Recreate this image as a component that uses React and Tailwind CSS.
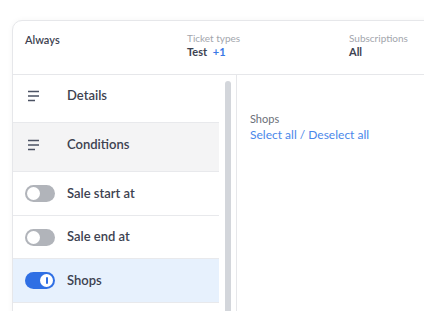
import React from 'react';

const LinesIcon = () => (
  <svg width="14" height="14" viewBox="0 0 14 14" className="text-[#4b5263]">
    <path d="M1 2.5h11M1 7h11M1 11.5h7" stroke="currentColor" strokeWidth="1.6" />
  </svg>
);

const Toggle = ({ on }) => (
  <div
    className={
      on
        ? 'w-[30px] h-[17px] rounded-full bg-[#2f6fe4] flex items-center justify-end px-[2px]'
        : 'w-[30px] h-[17px] rounded-full bg-[#b1b4ba] flex items-center justify-start px-[2px]'
    }
  >
    <div className="w-[13px] h-[13px] rounded-full bg-white flex items-center justify-center">
      {on && <div className="w-[2px] h-[7px] rounded-full bg-[#2f6fe4]" />}
    </div>
  </div>
);

const NavRow = ({ label, icon, className, iconPad }) => (
  <div className={`flex items-center border-b border-[#e8e9ec] ${className}`}>
    <div className={`w-[54px] flex items-center ${iconPad}`}>{icon}</div>
    <span className="text-[13px] font-semibold text-[#3d4250]">{label}</span>
  </div>
);

const App = () => {
  return (
    <div
      className="w-[424px] h-[311px] overflow-hidden bg-white pt-5 pl-3"
      style={{ fontFamily: 'Lato, "Open Sans", sans-serif' }}
    >
      <div className="w-[520px] h-[320px] rounded-[10px] border border-[#e6e7ea] shadow-[0_0_6px_rgba(0,0,0,0.04)] bg-white flex flex-col">
        {/* Header */}
        <div className="h-[54px] border-b border-[#e6e7ea] flex pl-3 pt-[11px]">
          <div className="w-[162px] shrink-0 text-[11px] leading-[14px] font-semibold text-[#3d4250] pt-[1px]">
            Always
          </div>
          <div className="w-[162px] shrink-0">
            <div className="text-[10px] text-[#a3a6ad] leading-[12px]">Ticket types</div>
            <div className="text-[11px] leading-[14px] font-bold text-[#3d4250] mt-[1px]">
              Test <span className="text-[#3a78e6] ml-[3px]">+1</span>
            </div>
          </div>
          <div className="w-[162px] shrink-0">
            <div className="text-[10px] text-[#a3a6ad] leading-[12px]">Subscriptions</div>
            <div className="text-[11px] leading-[14px] font-bold text-[#3d4250] mt-[1px]">All</div>
          </div>
        </div>

        {/* Body */}
        <div className="flex flex-1">
          <div className="w-[224px] flex border-r border-[#e6e7ea]">
            <div className="w-[206px] flex flex-col">
              <NavRow label="Details" icon={<LinesIcon />} iconPad="pl-[14px]" className="h-[48px] pb-[5px]" />
              <NavRow
                label="Conditions"
                icon={<LinesIcon />}
                iconPad="pl-[14px]"
                className="h-[49px] pb-[5px] bg-[#f4f4f5]"
              />
              <NavRow label="Sale start at" icon={<Toggle />} iconPad="pl-[12px]" className="h-[44px]" />
              <NavRow label="Sale end at" icon={<Toggle />} iconPad="pl-[12px]" className="h-[43px]" />
              <NavRow label="Shops" icon={<Toggle on />} iconPad="pl-[12px]" className="h-[44px] bg-[#e7f1fd]" />
            </div>
            <div className="ml-[6px] mt-[6px] w-[6px] rounded-t-full bg-[#d3d6db]" />
          </div>

          <div className="flex-1 pl-[13px] pt-[36px]">
            <div className="text-[11px] text-[#6b6f78]">Shops</div>
            <div className="text-[12px] leading-[14px] text-[#4a87ea]">
              <span>Select all</span> / <span>Deselect all</span>
            </div>
          </div>
        </div>
      </div>
    </div>
  );
};

export default App;
